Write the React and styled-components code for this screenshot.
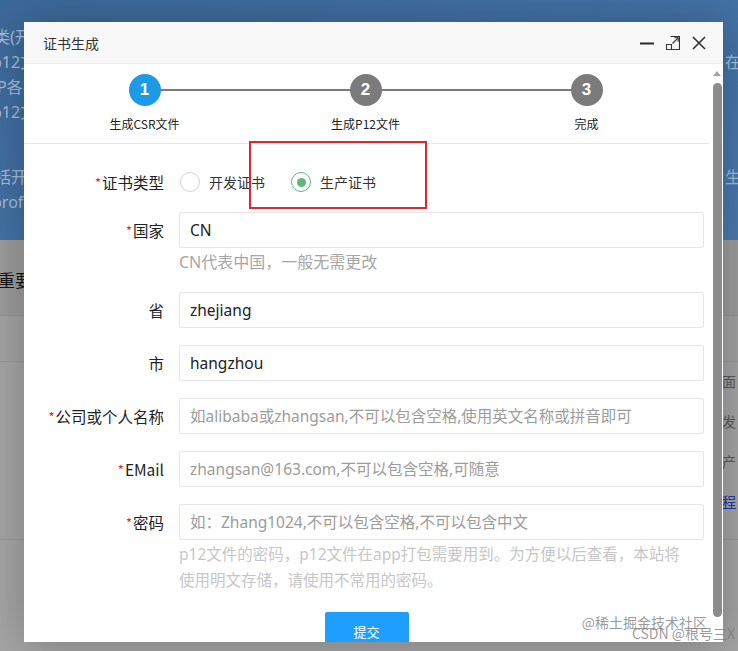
import React from "react";
import styled, { createGlobalStyle } from "styled-components";

const GlobalStyle = createGlobalStyle`
  html, body {
    margin: 0;
    padding: 0;
  }
  body {
    font-family: "Noto Sans", "Noto Sans CJK SC", sans-serif;
  }
  * {
    box-sizing: border-box;
  }
`;

const Page = styled.div`
  position: relative;
  width: 738px;
  height: 651px;
  overflow: hidden;
  background: #a4a4a4;
`;

/* ---------- page behind the dialog ---------- */

const Banner = styled.div`
  height: 240px;
  padding-top: 25px;
  background: linear-gradient(160deg, #3c6898 0%, #4473a6 60%, #4a7aad 100%);
  color: #a3bcda;
  font-size: 16px;
`;

const BannerRow = styled.div`
  display: flex;
  height: 25px;
  line-height: 25px;
  white-space: nowrap;
  margin-top: ${(p) => p.gap || 0}px;
`;

const LeftCell = styled.div`
  flex: none;
  width: 725px;
  overflow: hidden;
  & > span {
    display: inline-block;
    margin-left: ${(p) => p.shift || 0}px;
  }
`;

const RightCell = styled.div`
  flex: 1;
  overflow: hidden;
  margin-left: ${(p) => p.shift || 0}px;
`;

const NavBar = styled.div`
  height: 75px;
  background: #9b9b9b;
  display: flex;
  align-items: center;
  padding-top: 4px;
  font-size: 17px;
  color: #151515;
  & > span {
    margin-left: -2px;
  }
`;

const SubBar = styled.div`
  height: 47px;
  background: #a2a2a2;
  border-top: 1px solid #939393;
  border-bottom: 1px solid #969696;
`;

const ContentRow = styled.div`
  display: flex;
  height: 40px;
  line-height: 40px;
  font-size: 14px;
  color: ${(p) => (p.link ? "#1d37b3" : "#5a5a5a")};
  text-decoration: ${(p) => (p.link ? "underline" : "none")};
  white-space: nowrap;
`;

const BottomLine = styled.div`
  margin-top: 17px;
  border-top: 1px solid #979797;
`;

/* ---------- dialog ---------- */

const Dialog = styled.div`
  position: absolute;
  top: 22px;
  left: 24px;
  width: 699px;
  height: 620px;
  background: #fff;
  box-shadow: 1px 1px 40px rgba(0, 0, 0, 0.25);
  display: flex;
  flex-direction: column;
`;

const TitleBar = styled.div`
  flex: none;
  height: 42px;
  display: flex;
  align-items: center;
  justify-content: space-between;
  padding: 0 17px 0 19px;
  background: #f8f8f8;
  border-bottom: 1px solid #ececec;
`;

const Title = styled.div`
  font-family: "Noto Sans CJK SC", sans-serif;
  font-size: 14px;
  color: #333;
`;

const Tools = styled.div`
  display: flex;
  gap: 12px;
  align-items: center;
`;

const DialogBody = styled.div`
  flex: 1;
  display: flex;
  overflow: hidden;
`;

const Main = styled.div`
  flex: 1;
  overflow: hidden;
`;

const ScrollTrack = styled.div`
  flex: none;
  width: 14px;
  display: flex;
  flex-direction: column;
  align-items: center;
  padding: 7px 0 25px 2px;
`;

const ScrollArrow = styled.div`
  width: 0;
  height: 0;
  border-left: 4px solid transparent;
  border-right: 4px solid transparent;
  border-bottom: 5px solid #a6a6a6;
`;

const ScrollThumb = styled.div`
  margin-top: 7px;
  flex: 1;
  width: 9px;
  border-radius: 5px;
  background: #8c8c8c;
`;

const Steps = styled.div`
  display: grid;
  grid-template-columns: repeat(3, 1fr);
  height: 80px;
  padding: 10px 12px 0 10px;
  border-bottom: 1px solid #e6e6e6;
`;

const Step = styled.div`
  position: relative;
  display: flex;
  flex-direction: column;
  align-items: center;

  &::before,
  &::after {
    content: "";
    position: absolute;
    top: 15px;
    height: 2px;
    background: #7a7a7a;
  }
  &::before {
    left: 0;
    right: 50%;
    display: ${(p) => (p.first ? "none" : "block")};
  }
  &::after {
    left: 50%;
    right: 0;
    display: ${(p) => (p.last ? "none" : "block")};
  }
`;

const StepDot = styled.div`
  position: relative;
  z-index: 1;
  width: 32px;
  height: 32px;
  border-radius: 50%;
  background: ${(p) => (p.active ? "#1b9be6" : "#7b7b7b")};
  color: #fff;
  font-family: "Liberation Sans", sans-serif;
  font-weight: bold;
  font-size: 17px;
  display: flex;
  align-items: center;
  justify-content: center;
`;

const StepLabel = styled.div`
  margin-top: 10px;
  font-family: "Noto Sans CJK SC", sans-serif;
  font-size: 12px;
  line-height: 16px;
  color: #222;
`;

const Form = styled.div`
  padding: 23px 5px 0 0;
`;

const FormRow = styled.div`
  display: grid;
  grid-template-columns: 140px 1fr;
  column-gap: 15px;
  margin-bottom: ${(p) => (p.tight ? 0 : 17)}px;
`;

const Label = styled.label`
  height: ${(p) => p.h || 36}px;
  display: flex;
  align-items: center;
  justify-content: flex-end;
  font-family: "Noto Sans CJK SC", sans-serif;
  font-size: 15.5px;
  color: #222;
  white-space: nowrap;
`;

const Star = styled.span`
  color: #ee1c1c;
  font-size: 13px;
  margin-right: 1px;
`;

const Radios = styled.div`
  height: 30px;
  display: flex;
  align-items: center;
  padding-left: 1px;
`;

const RadioItem = styled.div`
  display: flex;
  align-items: center;
  gap: 9px;
  margin-right: 26px;
  font-family: "Noto Sans CJK SC", sans-serif;
  font-size: 14px;
  color: #333;
`;

const RadioCircle = styled.span`
  width: 20px;
  height: 20px;
  border-radius: 50%;
  border: 1.5px solid ${(p) => (p.checked ? "#5fb878" : "#d2d2d2")};
  display: flex;
  align-items: center;
  justify-content: center;
  &::after {
    content: "";
    width: 9px;
    height: 9px;
    border-radius: 50%;
    background: #5fb878;
    display: ${(p) => (p.checked ? "block" : "none")};
  }
`;

const Input = styled.input`
  width: 100%;
  height: 36px;
  padding: 0 10px;
  border: 1px solid #e6e6e6;
  border-radius: 2px;
  outline: none;
  font-family: "Noto Sans", "Noto Sans CJK SC", sans-serif;
  font-size: 15.5px;
  color: #222;
  &::placeholder {
    color: #9c9c9c;
  }
`;

const Hint = styled.div`
  font-family: "Noto Sans", "Noto Sans CJK SC", sans-serif;
  font-size: ${(p) => (p.light ? 15.5 : 16)}px;
  line-height: 26px;
  color: ${(p) => (p.light ? "#c6c6c6" : "#a6a6a6")};
  padding-top: 1px;
  & > span {
    display: block;
    white-space: nowrap;
  }
`;

const Actions = styled.div`
  display: flex;
  justify-content: center;
  margin-top: 19px;
  margin-right: -5px;
`;

const SubmitButton = styled.button`
  width: 84px;
  height: 38px;
  border: none;
  border-radius: 2px;
  background: #1e9fff;
  color: #fff;
  font-family: "Noto Sans CJK SC", sans-serif;
  font-size: 13px;
`;

const Annotation = styled.div`
  position: absolute;
  top: 119px;
  left: 225px;
  width: 178px;
  height: 68px;
  border: 2.5px solid #d52a36;
  pointer-events: none;
`;

const Watermark = styled.div`
  position: absolute;
  right: 3px;
  bottom: 12px;
  display: flex;
  flex-direction: column;
  align-items: flex-end;
  font-family: "Noto Sans CJK SC", sans-serif;
  font-size: 14px;
  line-height: 11px;
  color: rgba(120, 120, 120, 0.75);
  & > span:first-child {
    margin-right: 28px;
  }
`;

const MinIcon = () => (
  <svg width="14" height="14" viewBox="0 0 14 14">
    <path d="M0 7.5H14" stroke="#2b2b2b" strokeWidth="2" />
  </svg>
);

const MaxIcon = () => (
  <svg width="14" height="14" viewBox="0 0 14 14" fill="none" stroke="#333" strokeWidth="1.1">
    <path d="M4.5 0.5H13.5V13.5H0.5V8" />
    <path d="M0.5 8.5H5.5V13.5" />
    <path d="M6.5 7.5L12.2 1.8" />
    <path d="M8.3 1.8H12.2V5.7" />
  </svg>
);

const CloseIcon = () => (
  <svg width="14" height="14" viewBox="0 0 14 14">
    <path d="M1 1L13 13M13 1L1 13" stroke="#2b2b2b" strokeWidth="1.5" />
  </svg>
);

const bannerLines = [
  { left: "类(开发证书和生产证书)", shift: -6, right: "" },
  { left: "p12文件和描述文件都需要", shift: -8, right: "在" },
  { left: "P各不相同", shift: -3, right: "" },
  { left: "p12文件和描述文件", shift: -8, right: "" },
  { left: "括开发和生产两种", shift: -5, right: "生", gap: 40 },
  { left: "profile文件", shift: -8, right: "" },
];

const contentRows = [
  { text: "面" },
  { text: "发" },
  { text: "产" },
  { text: "程", link: true },
];

const fields = [
  { key: "province", label: "省", value: "zhejiang" },
  { key: "city", label: "市", value: "hangzhou" },
  {
    key: "company",
    label: "公司或个人名称",
    required: true,
    placeholder: "如alibaba或zhangsan,不可以包含空格,使用英文名称或拼音即可",
  },
  {
    key: "email",
    label: "EMail",
    required: true,
    placeholder: "zhangsan@163.com,不可以包含空格,可随意",
  },
];

const steps = ["生成CSR文件", "生成P12文件", "完成"];

const App = () => {
  return (
    <Page>
      <GlobalStyle />

      <Banner>
        {bannerLines.map((line, i) => (
          <BannerRow key={i} gap={line.gap}>
            <LeftCell shift={line.shift}>
              <span>{line.left}</span>
            </LeftCell>
            <RightCell>{line.right}</RightCell>
          </BannerRow>
        ))}
      </Banner>
      <NavBar>
        <span>重要提示</span>
      </NavBar>
      <SubBar />
      {contentRows.map((row, i) => (
        <ContentRow key={i} link={row.link}>
          <LeftCell />
          <RightCell shift={-3}>{row.text}</RightCell>
        </ContentRow>
      ))}
      <BottomLine />

      <Dialog>
        <TitleBar>
          <Title>证书生成</Title>
          <Tools>
            <MinIcon />
            <MaxIcon />
            <CloseIcon />
          </Tools>
        </TitleBar>

        <DialogBody>
          <Main>
            <Steps>
              {steps.map((s, i) => (
                <Step key={s} first={i === 0} last={i === steps.length - 1}>
                  <StepDot active={i === 0}>{i + 1}</StepDot>
                  <StepLabel>{s}</StepLabel>
                </Step>
              ))}
            </Steps>

            <Form>
              <FormRow style={{ marginBottom: 15 }}>
                <Label h={30}>
                  <Star>*</Star>证书类型
                </Label>
                <Radios>
                  <RadioItem>
                    <RadioCircle />
                    开发证书
                  </RadioItem>
                  <RadioItem>
                    <RadioCircle checked />
                    生产证书
                  </RadioItem>
                </Radios>
              </FormRow>

              <FormRow tight>
                <Label>
                  <Star>*</Star>国家
                </Label>
                <Input defaultValue="CN" />
              </FormRow>
              <FormRow>
                <span />
                <Hint>CN代表中国，一般无需更改</Hint>
              </FormRow>

              {fields.map((f) => (
                <FormRow key={f.key}>
                  <Label>
                    {f.required && <Star>*</Star>}
                    {f.label}
                  </Label>
                  <Input defaultValue={f.value} placeholder={f.placeholder} />
                </FormRow>
              ))}

              <FormRow tight>
                <Label>
                  <Star>*</Star>密码
                </Label>
                <Input placeholder="如：Zhang1024,不可以包含空格,不可以包含中文" />
              </FormRow>
              <FormRow tight>
                <span />
                <Hint light>
                  <span>p12文件的密码，p12文件在app打包需要用到。为方便以后查看，本站将</span>
                  <span>使用明文存储，请使用不常用的密码。</span>
                </Hint>
              </FormRow>

              <Actions>
                <SubmitButton>提交</SubmitButton>
              </Actions>
            </Form>
          </Main>
          <ScrollTrack>
            <ScrollArrow />
            <ScrollThumb />
          </ScrollTrack>
        </DialogBody>

        <Annotation />
      </Dialog>

      <Watermark>
        <span>@稀土掘金技术社区</span>
        <span>CSDN @根号三X</span>
      </Watermark>
    </Page>
  );
};

export default App;
